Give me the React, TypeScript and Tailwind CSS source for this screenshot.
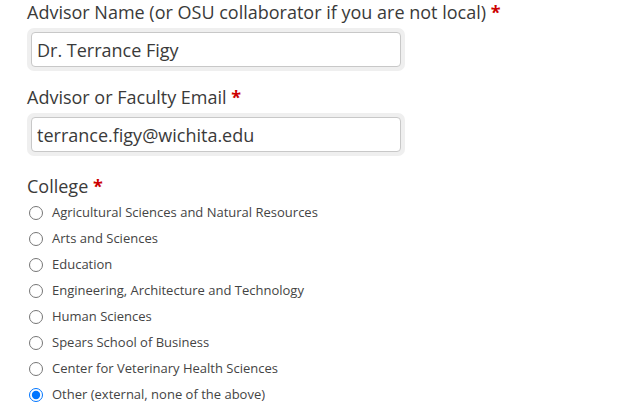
import { useState } from "react";

const COLLEGES = [
  "Agricultural Sciences and Natural Resources",
  "Arts and Sciences",
  "Education",
  "Engineering, Architecture and Technology",
  "Human Sciences",
  "Spears School of Business",
  "Center for Veterinary Health Sciences",
  "Other (external, none of the above)",
];

function Req() {
  return <span className="text-[#cc0000] font-bold"> *</span>;
}

function TextField({ value }: { value: string }) {
  return (
    <div className="w-[378px] p-[4px] rounded-[7px] bg-[#efefef]">
      <input
        type="text"
        defaultValue={value}
        className="block w-full h-[35px] px-[5px] border border-[#c8c8c8] rounded-[4px] bg-white text-[18px] text-[#3a3a3a] outline-none"
      />
    </div>
  );
}

export default function App() {
  const [college, setCollege] = useState(COLLEGES[7]);

  return (
    <div className="min-h-screen bg-white pl-[27px] font-['Open_Sans',sans-serif] text-[#3a3a3a]">
      <label className="block text-[18px] leading-[24px]">
        Advisor Name (or OSU collaborator if you are not local)<Req />
      </label>
      <div className="mt-[4px]">
        <TextField value="Dr. Terrance Figy" />
      </div>

      <label className="block mt-[14px] text-[18px] leading-[24px]">
        Advisor or Faculty Email<Req />
      </label>
      <div className="mt-[4px]">
        <TextField value="terrance.figy@wichita.edu" />
      </div>

      <div className="mt-[18px] text-[18px] leading-[24px]">
        College<Req />
      </div>
      <div className="flex flex-col pt-[2px]">
        {COLLEGES.map(c => (
          <label key={c} className="flex items-center h-[26px] text-[13px] text-[#444]">
            <input
              type="radio"
              name="college"
              checked={college === c}
              onChange={() => setCollege(c)}
              className="m-0 ml-[2px] w-[14px] h-[14px]"
            />
            <span className="ml-[9px]">{c}</span>
          </label>
        ))}
      </div>
    </div>
  );
}
